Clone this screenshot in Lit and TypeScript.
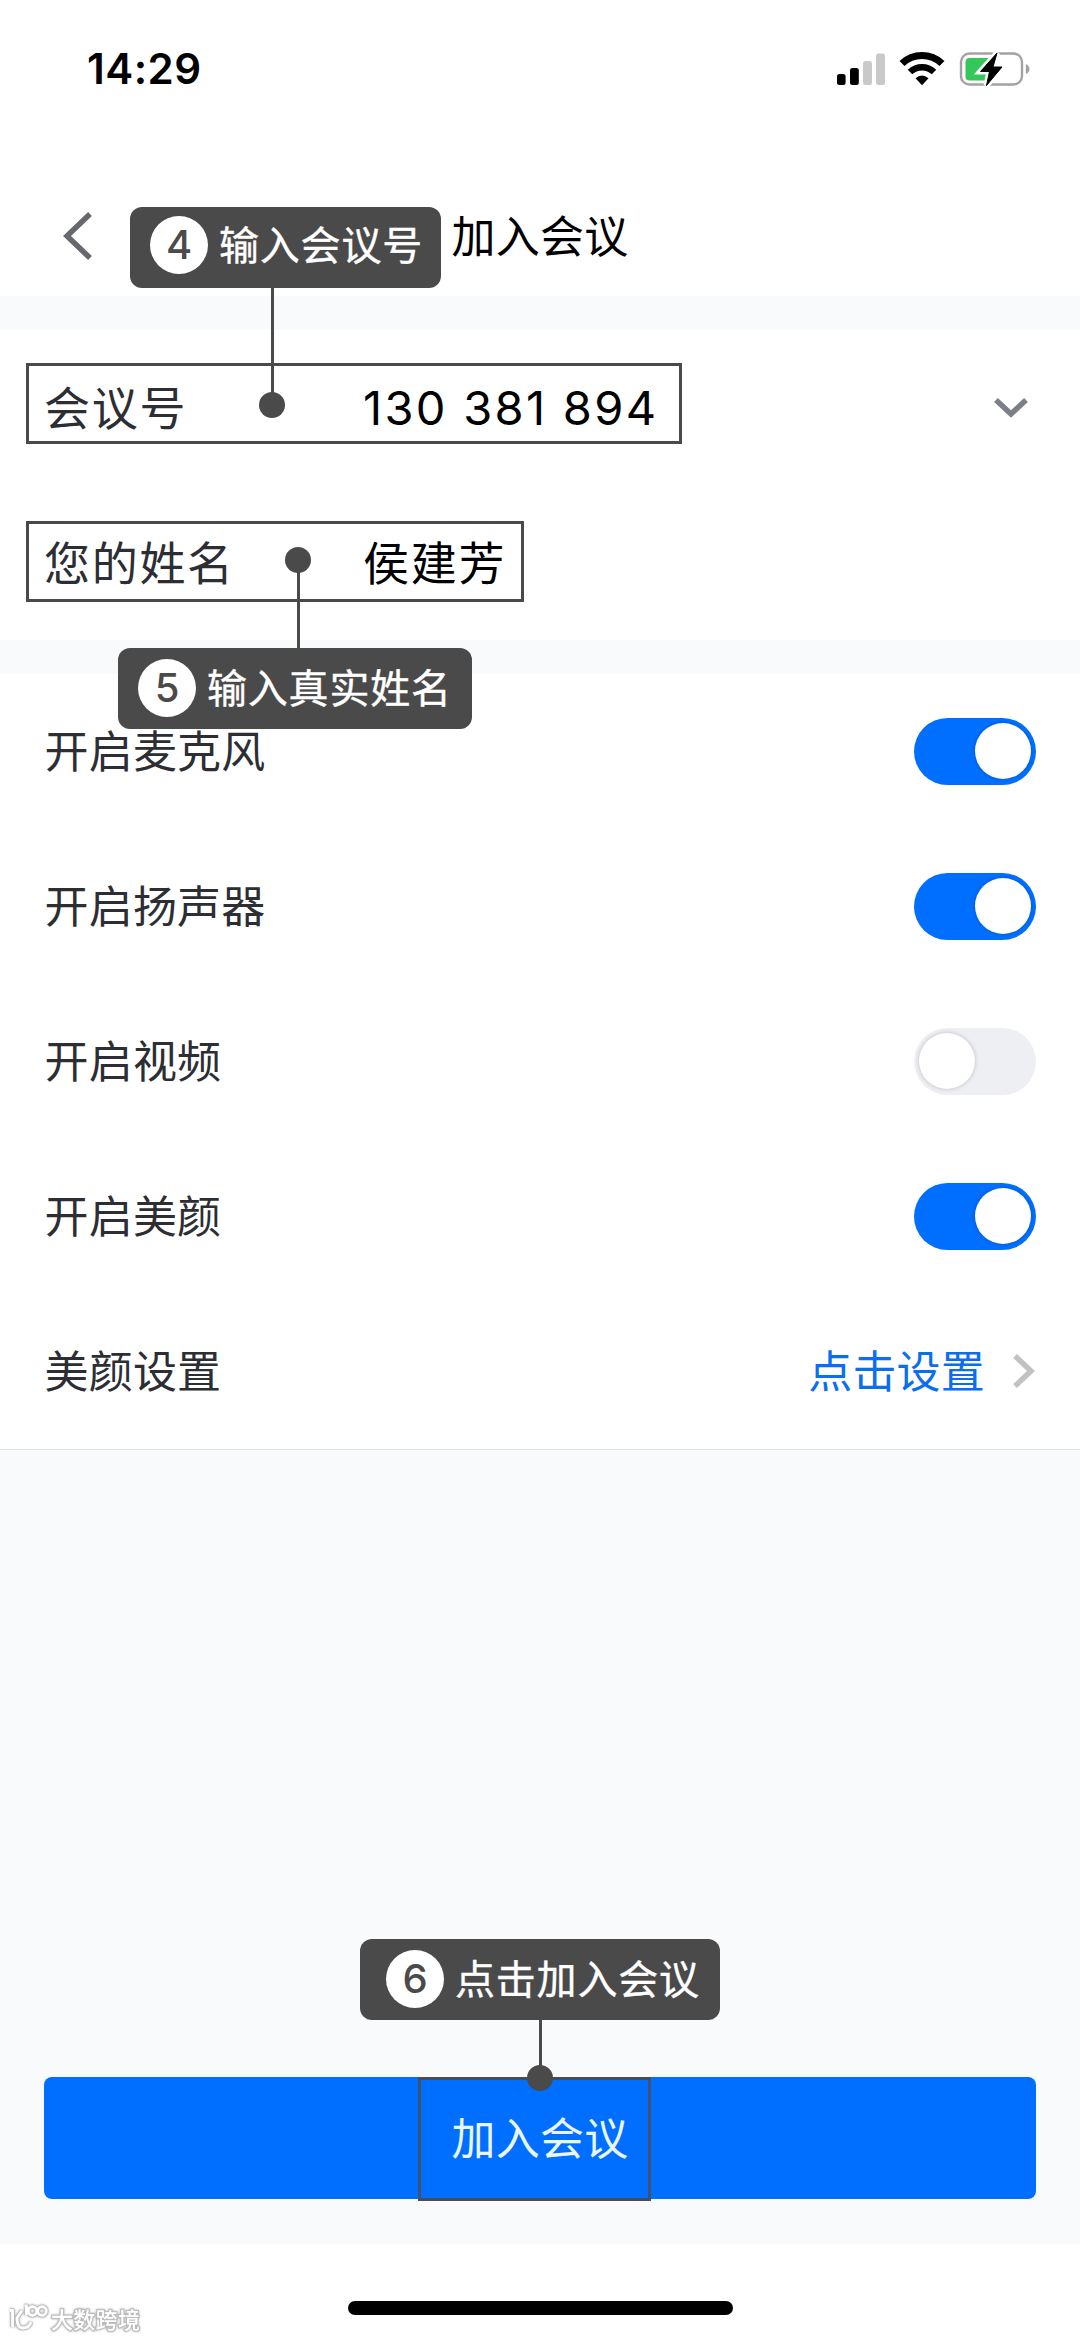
import { LitElement, html, css } from "lit";
import { customElement, property } from "lit/decorators.js";
import { classMap } from "lit/directives/class-map.js";

@customElement("toggle-switch")
class ToggleSwitch extends LitElement {
  @property({ type: Boolean }) on = false;

  static styles = css`
    :host { display: block; }
    .track {
      display: flex;
      box-sizing: border-box;
      width: 122px;
      height: 67px;
      padding: 5.5px 5.5px 5.5px 5px;
      border-radius: 34px;
      background: #eeeff3;
    }
    .track.on { background: #006fff; justify-content: flex-end; }
    .knob {
      width: 56px;
      height: 56px;
      border-radius: 50%;
      background: #fff;
      box-shadow: 0 0 4px rgba(0, 0, 0, 0.22);
    }
  `;

  render() {
    return html`<div class=${classMap({ track: true, on: this.on })}><div class="knob"></div></div>`;
  }
}

@customElement("step-callout")
class StepCallout extends LitElement {
  @property() step = "";
  @property() label = "";

  static styles = css`
    :host {
      display: flex;
      align-items: flex-start;
      box-sizing: border-box;
      height: 81px;
      border-radius: 12px;
      background: #4a4a4a;
      color: #fff;
    }
    .num {
      flex: none;
      width: 58px;
      height: 58px;
      border-radius: 50%;
      background: #fff;
      color: #4a4a4a;
      font: 500 40px/58px Inter, "Liberation Sans", sans-serif;
      text-align: center;
    }
    .label {
      margin-left: 11px;
      font: 400 40px/54px "Noto Sans CJK SC", sans-serif;
      -webkit-text-stroke: 0.4px #fff;
      letter-spacing: 0.8px;
      white-space: nowrap;
    }
  `;

  render() {
    return html`<span class="num">${this.step}</span><span class="label">${this.label}</span>`;
  }
}

@customElement("app-root")
class AppRoot extends LitElement {
  static styles = css`
    :host {
      display: flex;
      flex-direction: column;
      position: relative;
      width: 1080px;
      height: 2339px;
      overflow: hidden;
      background: #f8fafc;
      font-family: "Noto Sans CJK SC", sans-serif;
      color: #2c2e33;
    }
    svg { display: block; flex: none; }

    .status {
      display: flex;
      align-items: center;
      justify-content: space-between;
      height: 137px;
      box-sizing: border-box;
      padding: 0 50px 0 87px;
      background: #fff;
    }
    .time { font: 600 42px/60px Inter, sans-serif; color: #000; letter-spacing: 0.5px; }
    .nav {
      display: grid;
      grid-template-columns: 94px 1fr 94px;
      align-items: center;
      height: 159px;
      box-sizing: border-box;
      padding-top: 39px;
      background: #fff;
    }
    .back { margin-left: 62px; }
    .title { text-align: center; font-size: 44px; line-height: 60px; color: #000; padding-bottom: 5px; letter-spacing: 0.2px; }

    .fields { margin-top: 34px; background: #fff; height: 310px; display: flex; flex-direction: column; }
    .field {
      display: grid;
      grid-template-columns: 319px 1fr auto;
      align-items: center;
      height: 155px;
      box-sizing: border-box;
      padding: 0 52px 0 44px;
      font-size: 46px;
      letter-spacing: 1.7px;
      line-height: 64px;
    }
    .text { padding-bottom: 6px; }
    .value { color: #000; }
    .digits { font-family: Inter, sans-serif; font-size: 47px; letter-spacing: 2.3px; }

    .options { margin-top: 34px; background: #fff; border-bottom: 1px solid #dfe3e8; }
    .option {
      display: flex;
      align-items: center;
      justify-content: space-between;
      height: 155px;
      box-sizing: border-box;
      padding: 0 44px 1px 44.5px;
      font-size: 44px;
      line-height: 60px;
      letter-spacing: 0.2px;
    }
    .caption { padding-bottom: 5px; }
    .link { display: flex; align-items: center; gap: 27px; color: #0a6eee; }

    .action { flex: 1; display: flex; flex-direction: column; justify-content: flex-end; padding: 0 44px 45px; }
    .join {
      height: 122px;
      box-sizing: border-box;
      border: 0;
      border-radius: 8px;
      background: #006fff;
      color: #e8f6ff;
      font: 400 44px/119px "Noto Sans CJK SC", sans-serif;
      letter-spacing: 0.2px;
      padding: 0 0 3px;
      text-align: center;
    }
    .footer { display: flex; justify-content: center; align-items: flex-start; height: 95px; box-sizing: border-box; padding-top: 57px; background: #fff; }
    .home { width: 385px; height: 14px; border-radius: 7px; background: #000; }

    .frame, .wire, .dot, step-callout, .mark { position: absolute; }
    .frame { box-sizing: border-box; border: 3px solid #4a4a4a; }
    .f1 { left: 26px; top: 363px; width: 656px; height: 81px; }
    .f2 { left: 26px; top: 521px; width: 498px; height: 81px; }
    .f3 { left: 418px; top: 2077px; width: 233px; height: 124px; border-color: #40526f; border-top-color: #454d59; border-bottom-color: #454d59; }
    .wire { width: 3px; background: #4a4a4a; }
    .w1 { left: 271px; top: 287px; height: 110px; }
    .w2 { left: 297px; top: 565px; height: 85px; }
    .w3 { left: 539px; top: 2018px; height: 52px; }
    .dot { width: 26px; height: 26px; border-radius: 50%; background: #4a4a4a; }
    .d1 { left: 259px; top: 392px; }
    .d2 { left: 285px; top: 547px; }
    .d3 { left: 527px; top: 2065px; }
    .c1 { left: 130px; top: 207px; width: 311px; padding: 9px 0 0 20px; }
    .c2 { left: 118px; top: 648px; width: 354px; padding: 11px 0 0 20px; }
    .c3 { left: 360px; top: 1939px; width: 360px; padding: 11px 0 0 26px; }
    .mark { left: 8px; top: 2302px; display: flex; align-items: center; gap: 2px; filter: drop-shadow(0 0 1px #aaa); }
    .brand {
      font-size: 22px;
      line-height: 32px;
      font-weight: 500;
      letter-spacing: 0.3px;
      color: #fff;
      -webkit-text-stroke: 2px #bcbcbc;
      paint-order: stroke fill;
    }
  `;

  private options = [
    { label: "开启麦克风", on: true },
    { label: "开启扬声器", on: true },
    { label: "开启视频", on: false },
    { label: "开启美颜", on: true },
  ];

  render() {
    return html`
      <div class="status">
        <span class="time">14:29</span>
        <svg width="194" height="36" viewBox="836 50 194 36">
          <rect x="837" y="73" width="8.6" height="11" rx="2.5" />
          <rect x="850" y="67" width="8.8" height="17" rx="2.5" />
          <rect x="863" y="60" width="9" height="24" rx="2.5" fill="#c9c9c9" />
          <rect x="876" y="52.5" width="9" height="31.500" rx="2.5" fill="#c9c9c9" />
          <path d="M902 62.500A29 29 0 0 1 942 62.500" fill="none" stroke="#000" stroke-width="7.200" />
          <path d="M910 71A17.500 17.500 0 0 1 934 71" fill="none" stroke="#000" stroke-width="6.500" />
          <path d="M915.500 77.300Q922 71.500 928.500 77.300L922 84.300Z" />
          <rect x="961" y="52.500" width="61" height="31" rx="8.500" fill="none" stroke="#a2a2a5" stroke-width="2.400" />
          <rect x="965.500" y="57" width="30" height="22.500" rx="4" fill="#34c759" />
          <path d="M1025.800 63Q1029.500 64.500 1029.500 68T1025.800 73Z" fill="#a2a2a5" />
          <path d="M997 52L980.500 70.500H989.500L986.500 84.500L1002 66H993Z" fill="#000" stroke="#fff" stroke-width="6" />
          <path d="M997 52L980.500 70.500H989.500L986.500 84.500L1002 66H993Z" fill="#000" stroke="#000" stroke-width="1" stroke-linejoin="round" />
        </svg>
      </div>

      <div class="nav">
        <svg class="back" width="32" height="50" viewBox="0 0 32 50"><path d="M28 3L5 25L28 47" fill="none" stroke="#66686d" stroke-width="5.500" /></svg>
        <span class="title">加入会议</span>
      </div>

      <div class="fields">
        <div class="field">
          <span class="text">会议号</span><span class="value digits">130 381 894</span>
          <svg width="34" height="22" viewBox="0 0 34 22"><path d="M2 3L17 17L32 3" fill="none" stroke="#7c7e88" stroke-width="5.500" /></svg>
        </div>
        <div class="field"><span class="text">您的姓名</span><span class="text value">侯建芳</span></div>
      </div>

      <div class="options">
        ${this.options.map((o) => html`
          <div class="option"><span class="caption">${o.label}</span><toggle-switch ?on=${o.on}></toggle-switch></div>
        `)}
        <div class="option">
          <span class="caption">美颜设置</span>
          <span class="link"><span class="caption">点击设置</span>
            <svg width="24" height="36" viewBox="0 0 24 36"><path d="M3 3L19 18L3 33" fill="none" stroke="#c2c2c4" stroke-width="5.500" /></svg>
          </span>
        </div>
      </div>

      <div class="action"><button class="join">加入会议</button></div>
      <div class="footer"><div class="home"></div></div>

      <div class="frame f1"></div><div class="wire w1"></div><div class="dot d1"></div>
      <div class="frame f2"></div><div class="wire w2"></div><div class="dot d2"></div>
      <div class="frame f3"></div><div class="wire w3"></div><div class="dot d3"></div>
      <step-callout class="c1" step="4" label="输入会议号"></step-callout>
      <step-callout class="c2" step="5" label="输入真实姓名"></step-callout>
      <step-callout class="c3" step="6" label="点击加入会议"></step-callout>

      <div class="mark">
        <svg width="41" height="32" viewBox="0 0 41 32" fill="none" stroke-linejoin="round">
          <g stroke="#bcbcbc" stroke-width="4.500">
            <path d="M2 8.500H4.600V25M14 8.500L9 16Q9 26 15 26T23 20M16.500 4H18.500V13" /><circle cx="24.500" cy="9" r="4.300" /><circle cx="34" cy="9" r="4.300" />
          </g>
          <g stroke="#fff" stroke-width="2.800">
            <path d="M2 8.500H4.600V25M14 8.500L9 16Q9 26 15 26T23 20M16.500 4H18.500V13" /><circle cx="24.500" cy="9" r="4.300" /><circle cx="34" cy="9" r="4.300" />
          </g>
        </svg>
        <span class="brand">大数跨境</span>
      </div>
    `;
  }
}
